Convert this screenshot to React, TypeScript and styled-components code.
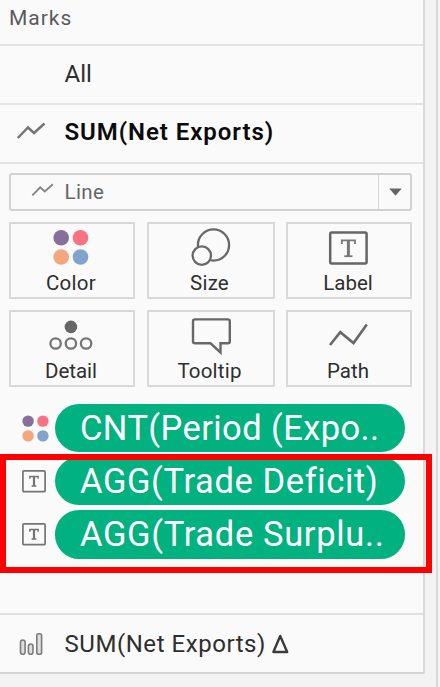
import React from "react";
import styled, { createGlobalStyle } from "styled-components";

const GlobalStyle = createGlobalStyle`
  * { box-sizing: border-box; }
  body { margin: 0; background: #f3f3f3; font-family: Roboto, "Liberation Sans", sans-serif; overflow: hidden; }
`;

const Page = styled.main`
  width: 440px;
  height: 687px;
  display: flex;
  gap: 11px;
  align-items: flex-start;
`;

const Panel = styled.section`
  width: 425px;
  height: 674px;
  flex: none;
  display: flex;
  flex-direction: column;
  background: #fafafa;
  border-right: 2px solid #d9d9d9;
  border-bottom: 2px solid #d6d6d6;
`;

const Gutter = styled.div`
  width: 4px;
  height: 687px;
  border-left: 2px solid #d9d9d9;
`;

const Row = styled.div<{ $h: number; $last?: boolean }>`
  height: ${(p) => p.$h}px;
  flex: none;
  display: flex;
  align-items: center;
  border-bottom: ${(p) => (p.$last ? "none" : "2px solid #e3e3e3")};
`;

const IconSlot = styled.div<{ $lift?: number }>`
  width: 64.5px;
  flex: none;
  display: flex;
  padding-left: 16px;
  padding-bottom: ${(p) => p.$lift ?? 0}px;
`;

const Text = styled.span<{
  $size: number;
  $spacing?: number;
  $color?: string;
  $weight?: number;
  $dy?: number;
}>`
  font-size: ${(p) => p.$size}px;
  letter-spacing: ${(p) => p.$spacing ?? 0}px;
  color: ${(p) => p.$color ?? "#2e2e2e"};
  font-weight: ${(p) => p.$weight ?? 400};
  line-height: 30px;
  margin-top: ${(p) => p.$dy ?? 0}px;
  white-space: nowrap;
`;

const Title = styled.header`
  height: 46px;
  flex: none;
  padding: 3px 0 0 9px;
  border-bottom: 2px solid #e3e3e3;
`;

const Body = styled.div`
  height: 451px;
  flex: none;
  padding: 9px 0 0 9px;
  border-bottom: 2px solid #e0e0e0;
`;

const MarkSelect = styled.div`
  width: 403px;
  height: 38px;
  display: flex;
  align-items: center;
  border: 2px solid #d2d2d2;
  border-radius: 3px;
`;

const SelectIcon = styled.div`
  width: 53.5px;
  display: flex;
  padding: 0 0 4px 20px;
`;

const SelectArrow = styled.div`
  width: 32px;
  height: 100%;
  margin-left: auto;
  display: flex;
  align-items: center;
  justify-content: center;
  padding-left: 1px;
  border-left: 1px solid #d4d4d4;
`;

const CardGrid = styled.div`
  display: grid;
  width: 403px;
  margin-top: 11px;
  grid-template-columns: 126px 128px 126px;
  grid-auto-rows: 77px;
  column-gap: 11.5px;
  row-gap: 11px;
`;

const Card = styled.div`
  display: flex;
  flex-direction: column;
  align-items: center;
  border: 2px solid #d8d8d8;
`;

const CardIcon = styled.div`
  height: 44px;
  display: flex;
`;

const CardLabel = styled(Text)`
  padding-right: 2px;
`;

const PillList = styled.div`
  display: flex;
  flex-direction: column;
  gap: 5px;
  margin-top: 17px;
`;

const PillRow = styled.div`
  display: flex;
  align-items: center;
`;

const PillIcon = styled.div`
  width: 46px;
  display: flex;
  padding-left: 12.7px;
`;

const Pill = styled.div`
  width: 350px;
  height: 48.2px;
  border-radius: 24.1px;
  background: #02b180;
  padding-left: 25px;
  display: flex;
  align-items: center;
`;

const Highlight = styled.div`
  position: absolute;
  left: 0;
  top: 454px;
  width: 432px;
  height: 119px;
  border: 6px solid #fe0000;
`;

const LineGlyph = ({ w = 30, h = 18, color = "#757575" }: { w?: number; h?: number; color?: string }) => (
  <svg width={w} height={h} viewBox="0 0 30 18" fill="none">
    <path d="M1.8 16L12 5.5L18 11L28.5 1.5" stroke={color} strokeWidth="2.5" />
  </svg>
);

const Dots = ({ size }: { size: number }) => (
  <svg width={size} height={size} viewBox="0 0 35 35">
    <circle cx="7.9" cy="7.9" r="7.4" fill="#86709b" />
    <circle cx="27.1" cy="7.9" r="7.4" fill="#f97283" />
    <circle cx="7.9" cy="27.1" r="7.4" fill="#f2a77c" />
    <circle cx="27.1" cy="27.1" r="7.4" fill="#82a4cc" />
  </svg>
);

const LabelBox = () => (
  <svg width="24" height="23" viewBox="0 0 24 23" fill="none" stroke="#747474">
    <rect x="0.9" y="0.9" width="22.2" height="20.8" rx="1" strokeWidth="1.7" />
    <path d="M7.9 8.7V6.4H16.1V8.7M9.6 16.1H14.4" strokeWidth="1.5" />
    <path d="M12 6.4V16.1" strokeWidth="2.2" />
  </svg>
);

const cardIcons: Record<string, React.ReactNode> = {
  Color: (
    <svg width="122" height="44" viewBox="0 0 122 44">
      <circle cx="50.2" cy="13.7" r="7.8" fill="#86709b" />
      <circle cx="69.5" cy="13.7" r="7.8" fill="#f97283" />
      <circle cx="50.2" cy="33" r="7.8" fill="#f2a77c" />
      <circle cx="69.5" cy="33" r="7.8" fill="#82a4cc" />
    </svg>
  ),
  Size: (
    <svg width="124" height="44" viewBox="0 0 124 44" fill="#fafafa" stroke="#686868" strokeWidth="2.3">
      <circle cx="64.5" cy="21" r="15.6" />
      <circle cx="52.8" cy="31.6" r="9.2" />
    </svg>
  ),
  Label: (
    <svg width="122" height="44" viewBox="0 0 122 44" fill="none" stroke="#666">
      <rect x="42.2" y="8.5" width="36.4" height="31" rx="1.5" strokeWidth="2.5" />
      <path d="M53.8 20V16.3H67V20" stroke="#777" strokeWidth="1.8" />
      <path d="M60.4 16V32" stroke="#777" strokeWidth="3" />
      <path d="M56.3 32.2H64.5" stroke="#777" strokeWidth="1.8" />
    </svg>
  ),
  Detail: (
    <svg width="122" height="44" viewBox="0 0 122 44" fill="none" stroke="#757575" strokeWidth="2.3">
      <circle cx="59.9" cy="14.9" r="6.3" fill="#666" stroke="none" />
      <circle cx="44.6" cy="31.5" r="5.2" />
      <circle cx="59.9" cy="31.5" r="5.2" />
      <circle cx="75.1" cy="31.5" r="5.2" />
    </svg>
  ),
  Tooltip: (
    <svg width="124" height="44" viewBox="0 0 124 44" fill="none" stroke="#686868" strokeWidth="2.4">
      <path d="M46 7.4H78.8Q80.8 7.4 80.8 9.4V29.3Q80.8 31.3 78.8 31.3H71.5V40.5L61.5 31.3H46Q44 31.3 44 29.3V9.4Q44 7.4 46 7.4Z" />
    </svg>
  ),
  Path: (
    <svg width="122" height="44" viewBox="0 0 122 44" fill="none">
      <path d="M42 33L52.3 20.2L65.5 31L78.8 12.5" stroke="#686868" strokeWidth="2.6" />
    </svg>
  ),
};

const cards = [
  { name: "Color", spacing: 0.3 },
  { name: "Size", spacing: 0.2 },
  { name: "Label", spacing: 0 },
  { name: "Detail", spacing: 0 },
  { name: "Tooltip", spacing: 0.2 },
  { name: "Path", spacing: 0 },
];

const pills = [
  { text: "CNT(Period (Expo..", icon: "color", spacing: 0.4 },
  { text: "AGG(Trade Deficit)", icon: "label", spacing: 0.6 },
  { text: "AGG(Trade Surplu..", icon: "label", spacing: 0.65 },
];

export default function App() {
  return (
    <>
      <GlobalStyle />
      <Page>
        <Panel>
          <Title>
            <Text $size={21} $color="#5a5a5a" $spacing={1}>Marks</Text>
          </Title>
          <Row $h={59}>
            <IconSlot />
            <Text $size={24} $dy={-1}>All</Text>
          </Row>
          <Row $h={59}>
            <IconSlot $lift={5}><LineGlyph /></IconSlot>
            <Text $size={24} $weight={600} $color="#0b0b0b" $spacing={0.95} $dy={-4}>SUM(Net Exports)</Text>
          </Row>
          <Body>
            <MarkSelect>
              <SelectIcon><LineGlyph w={23} h={14} color="#858585" /></SelectIcon>
              <Text $size={20.5} $color="#666" $spacing={0.4}>Line</Text>
              <SelectArrow>
                <svg width="13" height="8" viewBox="0 0 13 8"><path d="M0.3 0.5H12.7L6.5 7.7Z" fill="#666" /></svg>
              </SelectArrow>
            </MarkSelect>
            <CardGrid>
              {cards.map((c) => (
                <Card key={c.name}>
                  <CardIcon>{cardIcons[c.name]}</CardIcon>
                  <CardLabel $size={20.5} $spacing={c.spacing}>{c.name}</CardLabel>
                </Card>
              ))}
            </CardGrid>
            <PillList>
              {pills.map((p) => (
                <PillRow key={p.text}>
                  <PillIcon>{p.icon === "color" ? <Dots size={27} /> : <LabelBox />}</PillIcon>
                  <Pill><Text $size={34.5} $color="#fff" $spacing={p.spacing}>{p.text}</Text></Pill>
                </PillRow>
              ))}
            </PillList>
          </Body>
          <Row as="footer" $h={57} $last>
            <IconSlot>
              <svg width="30" height="26" viewBox="0 0 30 26" fill="#dedede" stroke="#7c7c7c" strokeWidth="1.6">
                <rect x="4.5" y="9" width="4.6" height="14.3" rx="2.3" />
                <rect x="12.4" y="13" width="4.6" height="10.3" rx="2.3" />
                <rect x="20.8" y="2.7" width="4.8" height="20.6" rx="1.8" />
              </svg>
            </IconSlot>
            <Text $size={24} $spacing={0.55}>SUM(Net Exports)</Text>
            <svg width="27" height="24" viewBox="0 0 27 24" fill="none">
              <path d="M14.2 4L7.4 20H21.2Z" stroke="#3a3a3a" strokeWidth="2.4" strokeLinejoin="round" />
            </svg>
          </Row>
        </Panel>
        <Gutter />
      </Page>
      <Highlight />
    </>
  );
}
